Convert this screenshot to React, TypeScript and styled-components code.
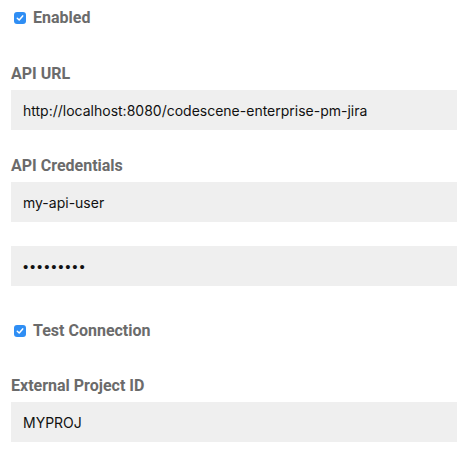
import styled, { createGlobalStyle } from "styled-components";

const GlobalStyle = createGlobalStyle`
  body {
    margin: 0;
    background: #ffffff;
  }
`;

const Form = styled.div`
  display: flex;
  flex-direction: column;
  width: 446px;
  padding: 8px 11px 0;
  font-family: Roboto, "Helvetica Neue", Arial, sans-serif;
`;

const CheckRow = styled.label<{ $top?: number }>`
  display: flex;
  align-items: center;
  column-gap: 7px;
  height: 20px;
  margin-top: ${(p) => p.$top ?? 0}px;
  padding-left: 3px;
  font-size: 16px;
  font-weight: 700;
  color: #6b6b6b;
  line-height: 20px;
`;

const Box = styled.span`
  display: inline-flex;
  align-items: center;
  justify-content: center;
  width: 12px;
  height: 12px;
  border-radius: 3px;
  background: #2f8ef4;
  flex-shrink: 0;
`;

const Label = styled.div<{ $top: number }>`
  margin-top: ${(p) => p.$top}px;
  margin-bottom: 6px;
  font-size: 16px;
  font-weight: 700;
  color: #6b6b6b;
  line-height: 20px;
`;

const Field = styled.div<{ $top?: number; $dots?: boolean }>`
  display: flex;
  align-items: center;
  height: 40px;
  margin-top: ${(p) => p.$top ?? 0}px;
  padding: 0 12px;
  background: #efefef;
  font-family: ${(p) => (p.$dots ? `"Liberation Sans", Arial` : `Inter, "Liberation Sans", Arial`)}, sans-serif;
  font-size: ${(p) => (p.$dots ? 15 : 14)}px;
  letter-spacing: ${(p) => (p.$dots ? "1.8px" : "0")};
  color: #111111;
`;

const Check = () => (
  <Box>
    <svg width="8" height="8" viewBox="0 0 8 8">
      <path d="M1.3 4.2 L3.2 6 L6.7 1.9" fill="none" stroke="#fff" strokeWidth="1.5" strokeLinecap="round" strokeLinejoin="round" />
    </svg>
  </Box>
);

export default function App() {
  return (
    <>
      <GlobalStyle />
      <Form>
        <CheckRow>
          <Check />
          Enabled
        </CheckRow>
        <Label $top={36}>API URL</Label>
        <Field>http://localhost:8080/codescene-enterprise-pm-jira</Field>
        <Label $top={26}>API Credentials</Label>
        <Field>my-api-user</Field>
        <Field $top={24} $dots>
          •••••••••
        </Field>
        <CheckRow $top={35}>
          <Check />
          Test Connection
        </CheckRow>
        <Label $top={35}>External Project ID</Label>
        <Field>MYPROJ</Field>
      </Form>
    </>
  );
}
